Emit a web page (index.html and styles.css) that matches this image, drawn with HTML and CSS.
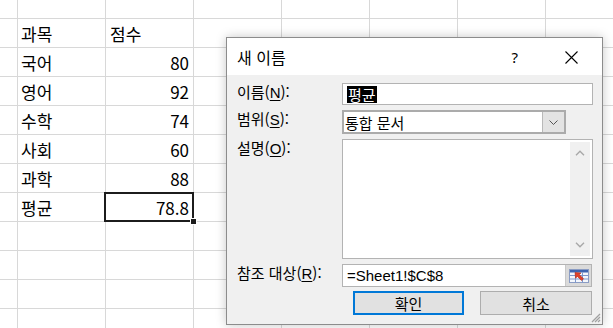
FILE: index.html
```html
<!DOCTYPE html>
<html lang="ko">
<head>
<meta charset="utf-8">
<title>새 이름</title>
<link rel="stylesheet" href="styles.css">
</head>
<body>
<div class="sheet">
  <div class="row top"><div class="c"></div><div class="c"></div><div class="c"></div><div class="c"></div><div class="c"></div><div class="c"></div><div class="c"></div><div class="c"></div></div>
  <div class="row"><div class="c"></div><div class="c">과목</div><div class="c">점수</div><div class="c"></div><div class="c"></div><div class="c"></div><div class="c"></div><div class="c"></div></div>
  <div class="row"><div class="c"></div><div class="c">국어</div><div class="c num">80</div><div class="c"></div><div class="c"></div><div class="c"></div><div class="c"></div><div class="c"></div></div>
  <div class="row"><div class="c"></div><div class="c">영어</div><div class="c num">92</div><div class="c"></div><div class="c"></div><div class="c"></div><div class="c"></div><div class="c"></div></div>
  <div class="row"><div class="c"></div><div class="c">수학</div><div class="c num">74</div><div class="c"></div><div class="c"></div><div class="c"></div><div class="c"></div><div class="c"></div></div>
  <div class="row"><div class="c"></div><div class="c">사회</div><div class="c num">60</div><div class="c"></div><div class="c"></div><div class="c"></div><div class="c"></div><div class="c"></div></div>
  <div class="row"><div class="c"></div><div class="c">과학</div><div class="c num">88</div><div class="c"></div><div class="c"></div><div class="c"></div><div class="c"></div><div class="c"></div></div>
  <div class="row"><div class="c"></div><div class="c">평균</div><div class="c num sel">78.8<span class="handle"></span></div><div class="c"></div><div class="c"></div><div class="c"></div><div class="c"></div><div class="c"></div></div>
  <div class="row"><div class="c"></div><div class="c"></div><div class="c"></div><div class="c"></div><div class="c"></div><div class="c"></div><div class="c"></div><div class="c"></div></div>
  <div class="row"><div class="c"></div><div class="c"></div><div class="c"></div><div class="c"></div><div class="c"></div><div class="c"></div><div class="c"></div><div class="c"></div></div>
  <div class="row"><div class="c"></div><div class="c"></div><div class="c"></div><div class="c"></div><div class="c"></div><div class="c"></div><div class="c"></div><div class="c"></div></div>
  <div class="row"><div class="c"></div><div class="c"></div><div class="c"></div><div class="c"></div><div class="c"></div><div class="c"></div><div class="c"></div><div class="c"></div></div>
</div>

<div class="dialog">
  <div class="titlebar">
    <span class="title">새 이름</span>
    <span class="help">?</span>
    <span class="close"><svg width="13" height="13" viewBox="0 0 13 13"><path d="M0.5 0.5 L12.5 12.5 M12.5 0.5 L0.5 12.5" stroke="#000" stroke-width="1.1" fill="none"/></svg></span>
  </div>
  <div class="body">
    <div class="form">
      <div class="label">이름(<u>N</u>):</div>
      <div class="field name"><span class="selected">평균</span></div>

      <div class="label">범위(<u>S</u>):</div>
      <div class="field combo"><span class="combo-text">통합 문서</span><span class="drop"><svg width="9" height="5" viewBox="0 0 9 5"><path d="M0.5 0.5 L4.5 4.5 L8.5 0.5" stroke="#555" stroke-width="1" fill="none"/></svg></span></div>

      <div class="label">설명(<u>O</u>):</div>
      <div class="field memo">
        <div class="scroll">
          <svg width="10" height="6" viewBox="0 0 10 6"><path d="M1 5.2 L5 1.2 L9 5.2" stroke="#a8a8a8" stroke-width="1.4" fill="none"/></svg>
          <svg width="10" height="6" viewBox="0 0 10 6"><path d="M1 0.8 L5 4.8 L9 0.8" stroke="#a8a8a8" stroke-width="1.4" fill="none"/></svg>
        </div>
      </div>

      <div class="label">참조 대상(<u>R</u>):</div>
      <div class="field ref"><span class="ref-text">=Sheet1!$C$8</span><span class="pick"><svg width="20" height="14" viewBox="0 0 20 14">
        <rect x="0.5" y="0.5" width="19" height="13" fill="#f4f7fc" stroke="#8a9cc4"/>
        <rect x="1" y="1" width="18" height="2.5" fill="#3d64b0"/>
        <path d="M1 6.5 H19 M1 10 H19 M6.5 3.5 V13.5 M13.5 3.5 V13.5" stroke="#7d97cc" stroke-width="1" fill="none"/>
        <path d="M6 3.5 L12 4 L10.2 5.6 L14.5 9.8 L12.6 11.6 L8.4 7.4 L6.6 9.2 Z" fill="#e0412a" stroke="#b02a1a" stroke-width="0.6"/>
      </svg></span></div>
    </div>
    <div class="buttons">
      <button class="btn ok">확인</button>
      <button class="btn">취소</button>
    </div>
  </div>
  <span class="grip"><svg width="11" height="11" viewBox="0 0 11 11"><path d="M10 2 L2 10 M10 5 L5 10 M10 8 L8 10" stroke="#a0a0a0" stroke-width="1.2" fill="none"/></svg></span>
</div>
</body>
</html>
```

FILE: styles.css
```css
html, body {
  margin: 0;
  padding: 0;
  width: 613px;
  height: 328px;
  overflow: hidden;
  background: #fff;
}

.sheet {
  display: flex;
  flex-direction: column;
  font-family: "Noto Sans CJK KR", "Noto Sans", sans-serif;
  font-size: 17px;
  color: #000;
}

.row {
  display: grid;
  grid-template-columns: 18px repeat(7, 88px);
  height: 29px;
}

.row.top {
  height: 19px;
}

.c {
  box-sizing: border-box;
  border-right: 1px solid #d8d8d8;
  border-bottom: 1px solid #d8d8d8;
  display: flex;
  align-items: center;
  padding: 1px 4px 0 3px;
  line-height: 1;
  white-space: nowrap;
}

.c:nth-child(3) {
  padding-left: 4px;
}

.c.num {
  justify-content: flex-end;
}

.c.sel {
  position: relative;
}

.c.sel::after {
  content: "";
  position: absolute;
  left: -2px;
  top: -1px;
  right: -1px;
  bottom: -1px;
  border: 2px solid #1c1c1c;
}

.handle {
  position: absolute;
  right: -4px;
  bottom: -4px;
  width: 5px;
  height: 5px;
  background: #1c1c1c;
  border: 1px solid #fff;
  z-index: 2;
}

/* Dialog */
.dialog {
  position: absolute;
  left: 226px;
  top: 37px;
  width: 377px;
  height: 288px;
  box-sizing: border-box;
  border: 1px solid #8c8c8c;
  background: #f0f0f0;
  box-shadow: 0 0 10px rgba(0, 0, 0, 0.22);
  font-family: "Liberation Sans", "Noto Sans CJK KR", sans-serif;
  font-size: 15px;
  color: #000;
  display: flex;
  flex-direction: column;
}

.titlebar {
  height: 37px;
  background: #fff;
  display: flex;
  align-items: center;
  padding-left: 10px;
}

.title {
  font-family: "Noto Sans CJK KR", sans-serif;
  font-size: 16px;
  flex: 1;
}

.help {
  font-family: "Noto Sans", sans-serif;
  font-size: 15px;
  margin-right: 47px;
}

.close {
  display: flex;
  margin-right: 24px;
  margin-top: 1px;
}

.body {
  flex: 1;
  padding: 8px 9px 0 10px;
  display: flex;
  flex-direction: column;
}

.form {
  display: grid;
  grid-template-columns: 105px 1fr;
  grid-template-rows: 22px 24px 120px 23px;
  row-gap: 5px;
}

.label {
  line-height: 17px;
  white-space: nowrap;
  font-family: "Noto Sans CJK KR", sans-serif;
  font-size: 15px;
}

.label u {
  font-family: "Liberation Sans", sans-serif;
  text-underline-offset: 2px;
}

.field {
  box-sizing: border-box;
  background: #fff;
  border: 1px solid #b3b3b3;
  display: flex;
  align-items: center;
}

.name {
  padding-left: 4px;
}

.selected {
  background: #000;
  color: #fff;
  font-family: "Noto Sans CJK KR", sans-serif;
  line-height: 17px;
  padding: 0 1px;
}

.combo {
  width: 224px;
  border: 2px solid #ababab;
}

.combo-text {
  flex: 1;
  padding-left: 1px;
  font-family: "Noto Sans CJK KR", sans-serif;
}

.drop {
  width: 21px;
  align-self: stretch;
  background: #e3e3e3;
  border-left: 1px solid #b9b9b9;
  display: flex;
  align-items: center;
  justify-content: center;
}

.memo {
  align-items: stretch;
  justify-content: flex-end;
  padding: 2px 2px 2px 0;
}

.scroll {
  width: 20px;
  background: #f0f0f0;
  display: flex;
  flex-direction: column;
  justify-content: space-between;
  align-items: center;
  padding: 8px 0 8px;
}

.ref {
  margin-right: 1px;
  padding-left: 4px;
  align-items: stretch;
}

.ref-text {
  flex: 1;
  display: flex;
  align-items: center;
}

.pick {
  width: 25px;
  background: #dadada;
  border-left: 1px solid #c8c8c8;
  display: flex;
  align-items: center;
  justify-content: center;
}

.buttons {
  margin-top: 4px;
  display: flex;
  justify-content: flex-end;
  gap: 16px;
  padding-right: 1px;
}

.btn {
  box-sizing: border-box;
  height: 24px;
  width: 112px;
  background: #e1e1e1;
  border: 1px solid #adadad;
  font-family: "Noto Sans CJK KR", sans-serif;
  font-size: 15px;
  color: #000;
  padding: 0;
  line-height: 1;
}

.btn.ok {
  width: 111px;
  border: 2px solid #0078d7;
}

.grip {
  position: absolute;
  right: 1px;
  bottom: 1px;
  display: flex;
}
```
